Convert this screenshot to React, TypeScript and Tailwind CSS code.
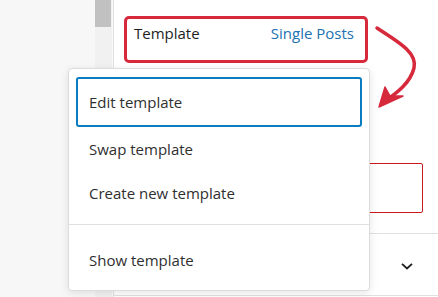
import React from "react";

export default function App() {
  const font = { fontFamily: '"Open Sans", "Noto Sans", sans-serif' };
  return (
    <div
      className="relative w-[438px] h-[297px] overflow-hidden flex bg-white"
      style={font}
    >
      {/* left canvas */}
      <div className="w-[95px] h-full bg-[#f7f7f7]" />
      {/* scrollbar */}
      <div className="w-[17px] h-full flex flex-col bg-[#f1f1f1]">
        <div className="h-[27px] w-[16px] bg-[#c1c1c1]" />
      </div>
      <div className="w-[1px] h-full bg-[#fafafa]" />
      {/* sidebar panel */}
      <div className="flex-1 h-full border-l border-[#e0e0e0] flex flex-col pt-[16px]">
        <div className="px-[10px]">
          <div className="w-[244px] h-[47px] border-[3px] border-[#d6293b] rounded-[5px] flex justify-between pt-[4px] pl-[7px] pr-[11px] text-[15px] leading-[21px]">
            <span className="text-[#1e1e1e]">Template</span>
            <span className="text-[#2271b1]">Single Posts</span>
          </div>
          <div className="mt-[100px] w-[299px] h-[50px] border border-[#cc1818] rounded-[2px]" />
        </div>
        <div className="mt-[20px] border-t border-[#e0e0e0] h-[63px] flex items-center justify-end pr-[21px] border-b">
          <svg width="20" height="20" viewBox="0 0 24 24" className="mt-[2px]">
            <path
              d="M6 9.5l6 5.5 6-5.5"
              fill="none"
              stroke="#1e1e1e"
              strokeWidth="2.2"
            />
          </svg>
        </div>
      </div>

      {/* popover menu */}
      <div className="absolute left-[68px] top-[68px] w-[302px] h-[223px] bg-white border border-[#dcdcdc] rounded-[4px] shadow-[0_2px_8px_rgba(0,0,0,0.10)] flex flex-col text-[15px] text-[#2f2f2f]">
        <div className="px-[7px] pt-[8px] pb-[9px] border-b border-[#e0e0e0] flex flex-col">
          <div className="h-[50px] border-2 border-[#0a7cc1] rounded-[3px] flex items-center pl-[11px] pt-[1px]">
            Edit template
          </div>
          <div className="h-[44px] flex items-center pl-[13px] pt-[1px]">Swap template</div>
          <div className="h-[44px] flex items-center pl-[13px] pt-[1px]">Create new template</div>
        </div>
        <div className="px-[7px] pt-[9px] flex flex-col">
          <div className="h-[50px] flex items-center pl-[13px] pt-[2px]">Show template</div>
        </div>
      </div>

      {/* annotation arrow */}
      <svg
        className="absolute left-0 top-0 pointer-events-none"
        width="438"
        height="297"
        viewBox="0 0 438 297"
      >
        <path
          d="M377 28 C 395 40, 418 52, 414 68 C 410 84, 395 94, 384 102"
          fill="none"
          stroke="#d6293b"
          strokeWidth="3.5"
          strokeLinecap="round"
        />
        <polygon points="379,107 385,87 390,96 403,96" fill="#d6293b" stroke="#d6293b" strokeWidth="1.5" strokeLinejoin="round" />
      </svg>
    </div>
  );
}
